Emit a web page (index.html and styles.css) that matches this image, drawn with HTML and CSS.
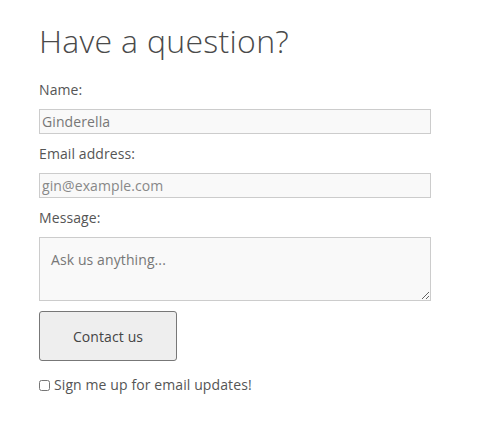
FILE: index.html
```html
<!DOCTYPE html>
<html lang="en">
<head>
<meta charset="utf-8">
<title>Contact</title>
<link rel="stylesheet" href="styles.css">
</head>
<body>
<main class="page">
  <h2 class="title">Have a question?</h2>
  <form class="form">
    <label class="label" for="name">Name:</label>
    <input class="field" id="name" type="text" value="Ginderella">
    <label class="label" for="email">Email address:</label>
    <input class="field" id="email" type="email" placeholder="gin@example.com">
    <label class="label" for="msg">Message:</label>
    <textarea class="area" id="msg" placeholder="Ask us anything..."></textarea>
    <button class="btn" type="button">Contact us</button>
    <label class="check"><input class="box" type="checkbox"> Sign me up for email updates!</label>
  </form>
</main>
</body>
</html>
```

FILE: styles.css
```css
html, body {
  margin: 0;
  padding: 0;
  background: #fff;
}
body {
  font-family: "Open Sans", Lato, sans-serif;
  color: #555;
}
.page {
  padding: 0 50px 0 39px;
}
.title {
  margin: 0;
  padding-top: 21px;
  font-size: 32px;
  line-height: 40px;
  font-weight: 300;
  letter-spacing: 0.3px;
  color: #4a4a4a;
}
.form {
  display: flex;
  flex-direction: column;
  align-items: flex-start;
  margin-top: 19px;
}
.label {
  font-size: 14px;
  line-height: 20px;
  margin-bottom: 9px;
  letter-spacing: 0.1px;
  color: #555;
}
.field {
  box-sizing: border-box;
  width: 392px;
  height: 25px;
  margin: 0 0 10px 0;
  padding: 0 2px;
  border: 1px solid #ccc;
  background: #f9f9f9;
  font-family: inherit;
  font-size: 14px;
  letter-spacing: 0.1px;
  color: #777;
  outline: none;
}
.field::placeholder {
  color: #888;
}
.area {
  box-sizing: border-box;
  width: 392px;
  height: 64px;
  margin: 0 0 10px 0;
  padding: 12px 11px;
  border: 1px solid #ccc;
  background: #f9f9f9;
  font-family: inherit;
  font-size: 14px;
  letter-spacing: 0.1px;
  line-height: 20px;
  color: #777;
  resize: vertical;
  outline: none;
}
.area::placeholder {
  color: #777;
}
.btn {
  box-sizing: border-box;
  width: 138px;
  height: 50px;
  margin: 0;
  border: 1px solid #777;
  border-radius: 3px;
  background: #eee;
  font-family: inherit;
  font-size: 14px;
  letter-spacing: 0.1px;
  color: #444;
}
.check {
  display: flex;
  align-items: center;
  margin-top: 14px;
  font-size: 14px;
  line-height: 20px;
  letter-spacing: 0.1px;
  color: #555;
}
.box {
  width: 11px;
  height: 11px;
  margin: 0 4px 0 0;
}
```
